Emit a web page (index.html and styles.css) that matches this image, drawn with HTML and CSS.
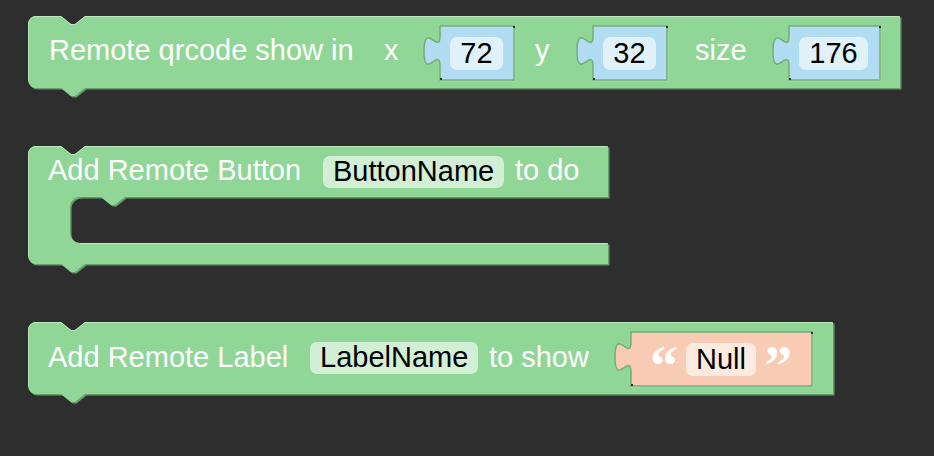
FILE: index.html
```html
<!DOCTYPE html>
<html lang="en">
<head>
<meta charset="utf-8">
<title>Remote blocks</title>
<link rel="stylesheet" href="styles.css">
</head>
<body>
<main class="workspace">
<svg class="canvas" width="934" height="456" viewBox="0 0 934 456" xmlns="http://www.w3.org/2000/svg">
  <!-- Block 1: Remote qrcode show in -->
  <g transform="translate(28,16)">
    <path class="blk-dark" transform="translate(1.5,1.5)" d="M 0,8 A 8,8 0 0 1 8,0 H 33 l 10,8 4,0 10,-8 H 872 V 72 H 57 l -10,8 -4,0 -10,-8 H 8 A 8,8 0 0 1 0,64 Z"/>
    <path class="blk" d="M 0,8 A 8,8 0 0 1 8,0 H 33 l 10,8 4,0 10,-8 H 872 V 72 H 57 l -10,8 -4,0 -10,-8 H 8 A 8,8 0 0 1 0,64 Z"/>
    <path class="blk-hl" d="M 0.5,64 V 8 A 7.5,7.5 0 0 1 8,0.5 H 33 l 10,8 4,0 10,-8 H 871"/>
    <text class="lbl" x="21" y="44">Remote qrcode show in</text>
    <text class="lbl" x="356" y="44">x</text>
    <text class="lbl" x="507" y="44">y</text>
    <text class="lbl" x="667" y="44">size</text>

    <g transform="translate(412,10)">
      <path class="sock-light" d="M 74.5,0 V 54.5 H 0"/>
      <path class="num" d="M 0,0 V 10 c 0,20 -16,-16 -16,15 s 16,-5 16,15 V 54 H 74 V 0 Z"/>
      <rect class="dot" x="73" y="0" width="2" height="2"/>
      <rect class="dot" x="0" y="52" width="2" height="2"/>
      <rect class="fld-bg" x="10" y="11" width="53" height="33" rx="7"/>
      <text class="lbl fld-txt" x="36.5" y="37" text-anchor="middle">72</text>
    </g>
    <g transform="translate(565,10)">
      <path class="sock-light" d="M 74.5,0 V 54.5 H 0"/>
      <path class="num" d="M 0,0 V 10 c 0,20 -16,-16 -16,15 s 16,-5 16,15 V 54 H 74 V 0 Z"/>
      <rect class="dot" x="73" y="0" width="2" height="2"/>
      <rect class="dot" x="0" y="52" width="2" height="2"/>
      <rect class="fld-bg" x="10" y="11" width="53" height="33" rx="7"/>
      <text class="lbl fld-txt" x="36.5" y="37" text-anchor="middle">32</text>
    </g>
    <g transform="translate(761,10)">
      <path class="sock-light" d="M 91.5,0 V 54.5 H 0"/>
      <path class="num" d="M 0,0 V 10 c 0,20 -16,-16 -16,15 s 16,-5 16,15 V 54 H 91 V 0 Z"/>
      <rect class="dot" x="90" y="0" width="2" height="2"/>
      <rect class="dot" x="0" y="52" width="2" height="2"/>
      <rect class="fld-bg" x="10" y="11" width="69" height="33" rx="7"/>
      <text class="lbl fld-txt" x="44.5" y="37" text-anchor="middle">176</text>
    </g>
  </g>

  <!-- Block 2: Add Remote Button -->
  <g transform="translate(28,146)">
    <path class="blk-dark" transform="translate(1.5,1.5)" d="M 0,8 A 8,8 0 0 1 8,0 H 33 l 10,8 4,0 10,-8 H 580 V 51 H 97 l -10,8 -4,0 -10,-8 H 52 A 10,10 0 0 0 42,61 V 87 A 10,10 0 0 0 52,97 H 580 V 118 H 57 l -10,8 -4,0 -10,-8 H 8 A 8,8 0 0 1 0,110 Z"/>
    <path class="blk" d="M 0,8 A 8,8 0 0 1 8,0 H 33 l 10,8 4,0 10,-8 H 580 V 51 H 97 l -10,8 -4,0 -10,-8 H 52 A 10,10 0 0 0 42,61 V 87 A 10,10 0 0 0 52,97 H 580 V 118 H 57 l -10,8 -4,0 -10,-8 H 8 A 8,8 0 0 1 0,110 Z"/>
    <path class="blk-hl" d="M 0.5,110 V 8 A 7.5,7.5 0 0 1 8,0.5 H 33 l 10,8 4,0 10,-8 H 579"/>
    <path class="blk-hl" d="M 52,97.5 H 579"/>
    <text class="lbl" x="20" y="34">Add Remote Button</text>
    <rect class="fld-bg" x="295" y="10" width="181" height="32" rx="7"/>
    <text class="lbl fld-txt" x="305" y="35">ButtonName</text>
    <text class="lbl" x="487" y="34">to do</text>
  </g>

  <!-- Block 3: Add Remote Label -->
  <g transform="translate(28,322)">
    <path class="blk-dark" transform="translate(1.5,1.5)" d="M 0,8 A 8,8 0 0 1 8,0 H 33 l 10,8 4,0 10,-8 H 805 V 72 H 57 l -10,8 -4,0 -10,-8 H 8 A 8,8 0 0 1 0,64 Z"/>
    <path class="blk" d="M 0,8 A 8,8 0 0 1 8,0 H 33 l 10,8 4,0 10,-8 H 805 V 72 H 57 l -10,8 -4,0 -10,-8 H 8 A 8,8 0 0 1 0,64 Z"/>
    <path class="blk-hl" d="M 0.5,64 V 8 A 7.5,7.5 0 0 1 8,0.5 H 33 l 10,8 4,0 10,-8 H 804"/>
    <text class="lbl" x="20" y="45">Add Remote Label</text>
    <rect class="fld-bg" x="282" y="20" width="168" height="32" rx="7"/>
    <text class="lbl fld-txt" x="292" y="45">LabelName</text>
    <text class="lbl" x="461" y="45">to show</text>

    <g transform="translate(603,10)">
      <path class="sock-light" d="M 181.5,0 V 54.5 H 0"/>
      <path class="str" d="M 0,0 V 10 c 0,20 -16,-16 -16,15 s 16,-5 16,15 V 54 H 181 V 0 Z"/>
      <rect class="dot" x="180" y="0" width="2" height="2"/>
      <rect class="dot" x="0" y="52" width="2" height="2"/>
      <text class="quote" x="19" y="53">“</text>
      <rect class="fld-bg" x="55" y="11" width="70" height="33" rx="7"/>
      <text class="lbl fld-txt" x="90" y="37" text-anchor="middle">Null</text>
      <text class="quote" x="133" y="53">”</text>
    </g>
  </g>
</svg>
</main>
</body>
</html>
```

FILE: styles.css
```css
html, body {
  margin: 0;
  padding: 0;
  background: #2e2e2e;
  overflow: hidden;
}

.workspace {
  width: 934px;
  height: 456px;
}

.canvas {
  display: block;
}

.blk {
  fill: #90d696;
}

.blk-dark {
  fill: #679c6b;
}

.blk-hl {
  fill: none;
  stroke: #b6e6b9;
  stroke-width: 1;
}

.num {
  fill: #b2dcf1;
  stroke: #72ae76;
  stroke-width: 1.5;
}

.str {
  fill: #f8cbb4;
  stroke: #72ae76;
  stroke-width: 1.5;
}

.sock-light {
  fill: none;
  stroke: #b6e6b9;
  stroke-width: 1.5;
}

.dot {
  fill: #2e2e2e;
}

.fld-bg {
  fill: #ffffff;
  fill-opacity: 0.6;
}

.lbl {
  font-family: "Liberation Sans", Arial, Helvetica, sans-serif;
  font-size: 29px;
  fill: #ffffff;
}

.fld-txt {
  fill: #000000;
}

.quote {
  font-family: "Liberation Serif", "Times New Roman", serif;
  font-weight: bold;
  font-size: 56px;
  fill: #ffffff;
}
```
